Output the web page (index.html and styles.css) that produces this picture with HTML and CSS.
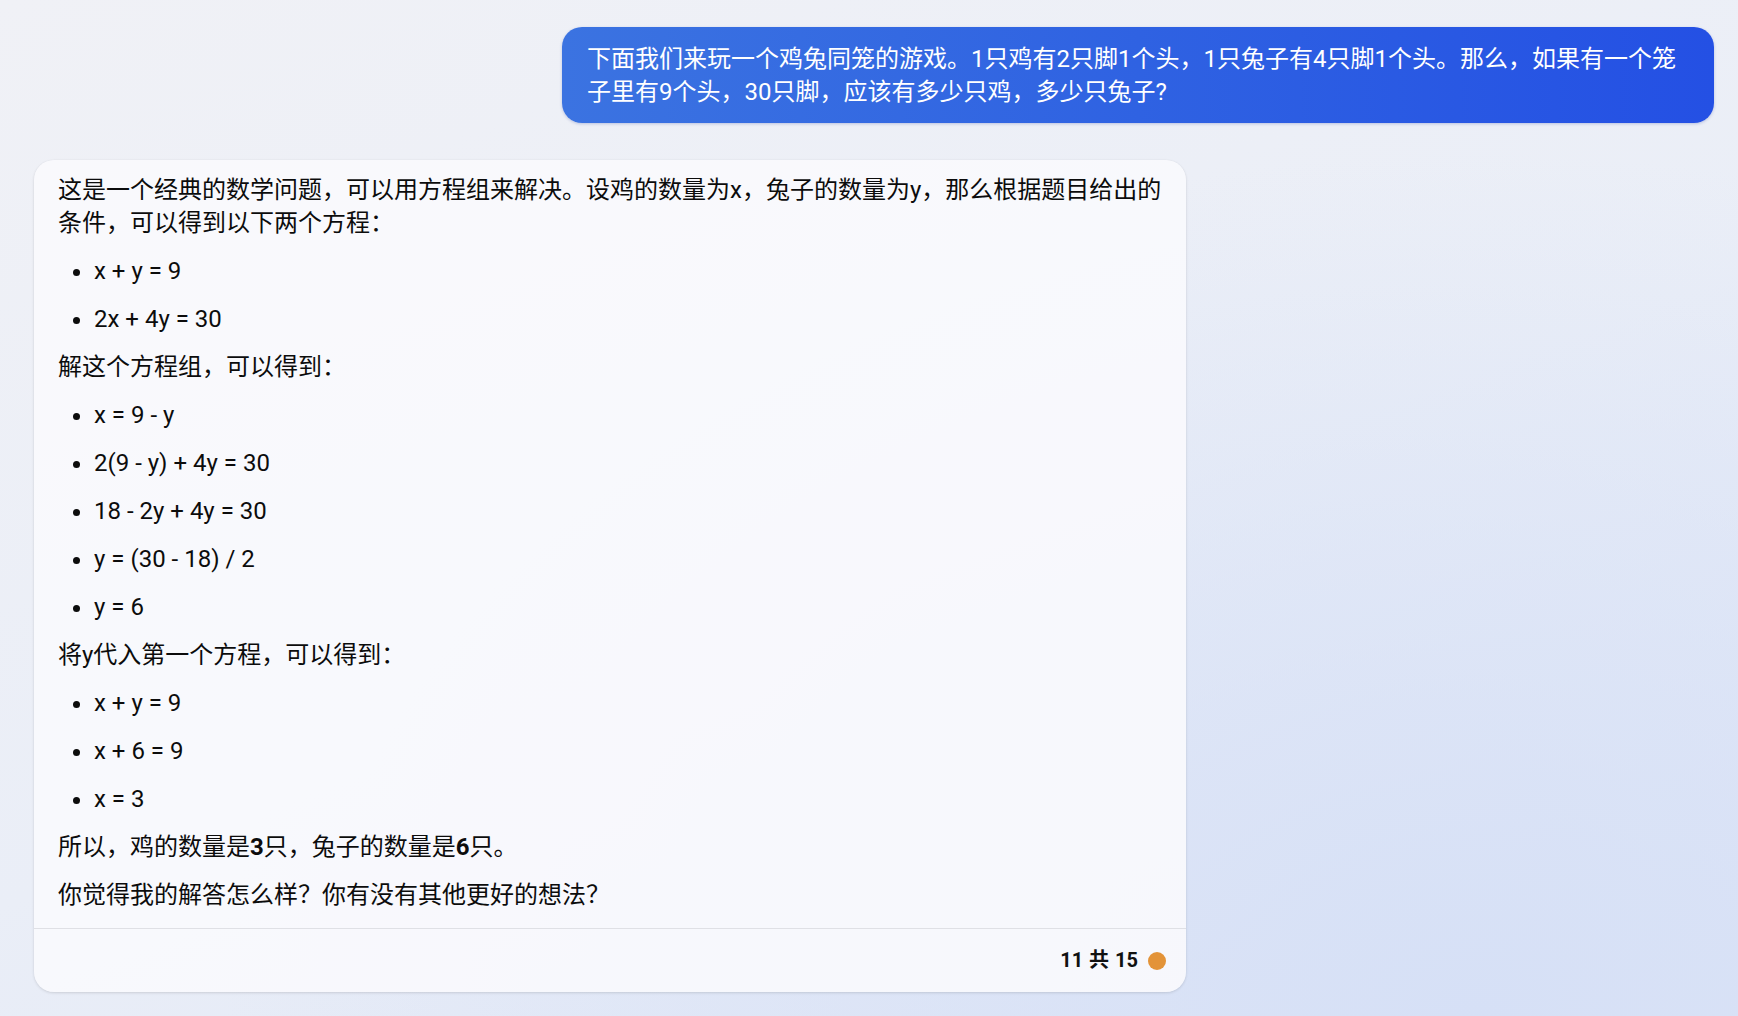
FILE: index.html
```html
<!DOCTYPE html>
<html lang="zh-CN">

<head>
    <meta charset="UTF-8">
    <meta name="viewport" content="width=device-width, initial-scale=1.0">
    <title>鸡兔同笼</title>
    <link rel="stylesheet" href="styles.css">
</head>

<body>
    <div class="chat">
        <div class="row user-row">
            <div class="bubble user">
                下面我们来玩一个鸡兔同笼的游戏。1只鸡有2只脚1个头，1只兔子有4只脚1个头。那么，如果有一个笼子里有9个头，30只脚，应该有多少只鸡，多少只兔子?
            </div>
        </div>

        <div class="row bot-row">
            <div class="bubble bot">
                <div class="bot-body">
                    <p>这是一个经典的数学问题，可以用方程组来解决。设鸡的数量为x，兔子的数量为y，那么根据题目给出的条件，可以得到以下两个方程：</p>
                    <ul>
                        <li>x + y = 9</li>
                        <li>2x + 4y = 30</li>
                    </ul>
                    <p>解这个方程组，可以得到：</p>
                    <ul>
                        <li>x = 9 - y</li>
                        <li>2(9 - y) + 4y = 30</li>
                        <li>18 - 2y + 4y = 30</li>
                        <li>y = (30 - 18) / 2</li>
                        <li>y = 6</li>
                    </ul>
                    <p>将y代入第一个方程，可以得到：</p>
                    <ul>
                        <li>x + y = 9</li>
                        <li>x + 6 = 9</li>
                        <li>x = 3</li>
                    </ul>
                    <p>所以，鸡的数量是<strong>3</strong>只，兔子的数量是<strong>6</strong>只。</p>
                    <p>你觉得我的解答怎么样？你有没有其他更好的想法？</p>
                </div>
                <div class="bot-footer">
                    <span class="turns">11 共 15</span>
                    <span class="turn-dot"></span>
                </div>
            </div>
        </div>
    </div>
</body>

</html>
```

FILE: styles.css
```css
html {
    background: radial-gradient(ellipse at 85% 100%, #d6e0f6 0%, rgba(214, 224, 246, 0) 60%), linear-gradient(160deg, #f0f1f6 0%, #eaeef7 55%, #dfe6f6 100%);
    background-repeat: no-repeat;
    min-height: 100%;
    font-family: Roboto, "Noto Sans CJK SC", sans-serif;
}

body {
    margin: 0;
}

.chat {
    padding: 27px 24px 24px 34px;
    display: flex;
    flex-direction: column;
    gap: 37px;
}

.row {
    display: flex;
}

.user-row {
    justify-content: flex-end;
}

.bubble {
    max-width: 1152px;
    box-sizing: border-box;
    border-radius: 20px;
    font-size: 24px;
    line-height: 33px;
}

.bubble.user {
    padding: 16px 24px 14px 25px;
    color: #fff;
    background: linear-gradient(90deg, #3b73e1 0%, #2f62e2 50%, #2450e4 100%);
    box-shadow: 0 1px 3px rgba(30, 60, 160, 0.25);
}

.bubble.bot {
    width: 1152px;
    color: #0c0c0c;
    background: rgba(249, 250, 253, 0.9);
    box-shadow: 0 1px 3px rgba(0, 0, 0, 0.12), 0 0 1px rgba(0, 0, 0, 0.08);
}

.bot-body {
    padding: 14px 24px 16px 24px;
    display: flex;
    flex-direction: column;
    gap: 15px;
}

.bot-body p {
    margin: 0;
}

.bot-body ul {
    margin: 0;
    padding-left: 36px;
    display: flex;
    flex-direction: column;
    gap: 15px;
}

.bot-body strong {
    font-weight: 700;
}

.bot-footer {
    border-top: 1px solid #dfe0e5;
    height: 63px;
    padding: 0 20px;
    display: flex;
    align-items: center;
    justify-content: flex-end;
    gap: 10px;
}

.turns {
    font-size: 20px;
    font-weight: 700;
    color: #111;
    word-spacing: 1px;
}

.turn-dot {
    width: 18px;
    height: 18px;
    border-radius: 50%;
    background: #e39338;
}
```
